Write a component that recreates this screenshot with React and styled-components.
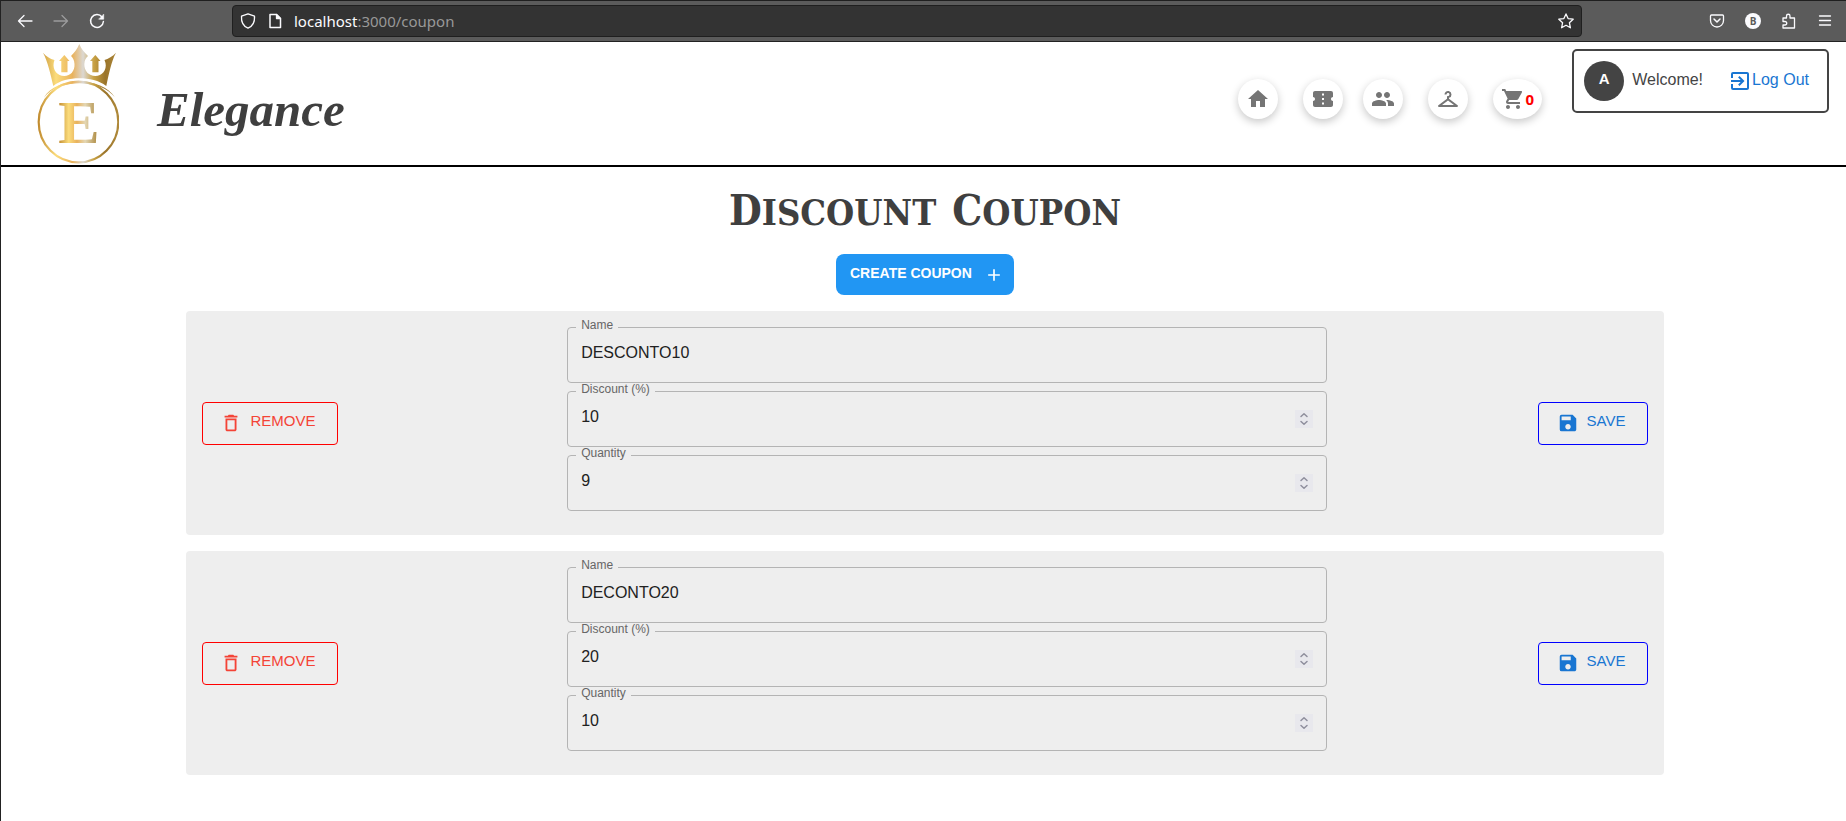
import React from "react";
import styled, { createGlobalStyle } from "styled-components";
import {
  MdHome,
  MdConfirmationNumber,
  MdPeople,
  MdCheckroom,
  MdShoppingCart,
  MdExitToApp,
  MdDeleteOutline,
  MdSave,
  MdAdd,
} from "react-icons/md";

const GlobalStyle = createGlobalStyle`
  *, *::before, *::after { box-sizing: border-box; }
  body {
    margin: 0;
    background: #fff;
    color: #444;
    font-family: "Liberation Sans", Arial, sans-serif;
    font-size: 16px;
  }
  button, input { font-family: inherit; }
`;

const Window = styled.div`
  min-height: 100vh;
  border-left: 1px solid #222;
`;

/* Browser bar */

const Toolbar = styled.div`
  display: flex;
  align-items: center;
  height: 42px;
  padding: 0 3px 0 6px;
  background: #5b5b5b;
  border-top: 1px solid #1f1f1f;
  border-bottom: 1px solid #222;
`;

const ToolGroup = styled.div`
  display: flex;
`;

const ToolButton = styled.button`
  display: flex;
  align-items: center;
  justify-content: center;
  width: 36px;
  height: 32px;
  padding: 0;
  border: 0;
  background: none;
  color: #fbfbfe;
  opacity: ${(p) => (p.disabled ? 0.4 : 1)};
`;

const AddressBar = styled.div`
  display: flex;
  align-items: center;
  gap: 11px;
  flex: 1;
  height: 32px;
  margin: 0 117px;
  padding: 0 7px;
  border: 1px solid #1f1f1f;
  border-radius: 4px;
  background: #333;
  color: #fbfbfe;
`;

const Address = styled.div`
  flex: 1;
  color: #989898;
  font: 15px/20px "Noto Sans", sans-serif;
`;

const Host = styled.span`
  color: #fbfbfe;
`;

/* Site header */

const Header = styled.header`
  display: flex;
  align-items: flex-start;
  padding-right: 17px;
  border-bottom: 2px solid #000;
`;

const Brand = styled.a`
  display: flex;
  align-items: center;
  gap: 38px;
  height: 123px;
  padding-left: 36px;
  color: #3f3f3f;
  text-decoration: none;
`;

const BrandName = styled.span`
  padding-top: 12px;
  font: italic bold 49px/56px "Liberation Serif", serif;
`;

const Nav = styled.nav`
  display: flex;
  gap: 20px;
  margin: 37px 30px 0 auto;
`;

const NavGroup = styled.div`
  display: flex;
  gap: 25px;
`;

const NavLink = styled.a`
  display: flex;
  align-items: center;
  justify-content: center;
  width: ${(p) => (p.$wide ? 49 : 40)}px;
  height: 40px;
  border-radius: 50%;
  background: #fff;
  box-shadow: 0 3px 8px rgba(0, 0, 0, 0.22);
  color: #757575;
  text-decoration: none;
`;

const CartCount = styled.span`
  color: #f00;
  font: bold 15px/20px "Open Sans", sans-serif;
`;

const UserBox = styled.div`
  display: flex;
  align-items: center;
  height: 64px;
  margin-top: 7px;
  padding: 0 18px 0 10px;
  border: 2px solid #444;
  border-radius: 5px;
`;

const Avatar = styled.div`
  width: 40px;
  height: 40px;
  margin-right: 8px;
  border-radius: 50%;
  background: #444;
  color: #fff;
  font: bold 15px/36px "Liberation Sans", sans-serif;
  text-align: center;
`;

const Welcome = styled.span`
  padding-bottom: 2px;
  margin-right: 25px;
`;

const LogOut = styled.a`
  display: flex;
  align-items: center;
  color: #1976d2;
  text-decoration: none;

  span { padding-bottom: 2px; }
`;

/* Coupon page */

const Main = styled.main`
  display: flex;
  flex-direction: column;
  align-items: center;
  padding: 18px 182px 40px 185px;
`;

const Title = styled.h1`
  display: flex;
  gap: 16px;
  height: 52px;
  margin: 0 0 17px;
  color: #3f3f3f;
  font: bold 36px/52px "DejaVu Serif Condensed", "DejaVu Serif", serif;
  font-stretch: condensed;
  text-transform: uppercase;
`;

const TitleWord = styled.span`
  display: block;

  &::first-letter { font-size: 42px; }
`;

const CreateButton = styled.button`
  display: flex;
  align-items: center;
  justify-content: space-between;
  width: 178px;
  height: 41px;
  padding: 0 10px 0 14px;
  border: 0;
  border-radius: 8px;
  background: #2196f3;
  color: #fff;
  font-size: 14px;
  font-weight: bold;

  span { padding-bottom: 3px; }
`;

const CouponList = styled.div`
  display: grid;
  gap: 16px;
  width: 100%;
  margin-top: 16px;
`;

const Card = styled.form`
  display: grid;
  grid-template-columns: 25fr 52fr 22fr;
  align-items: center;
  padding: 16px;
  border-radius: 4px;
  background: #eee;
`;

const ActionButton = styled.button`
  display: flex;
  align-items: center;
  justify-content: center;
  justify-self: ${(p) => (p.$end ? "end" : "start")};
  gap: 8px;
  width: ${(p) => (p.$end ? 110 : 136)}px;
  height: 43px;
  padding: 0 4px 0 0;
  border: 1px solid ${(p) => p.$border};
  border-radius: 4px;
  background: none;
  color: ${(p) => p.$color};
  font-size: 15px;

  span { padding-bottom: 6px; }
`;

const Fields = styled.div`
  display: grid;
  gap: 8px;
  padding-bottom: 8px;
`;

const Field = styled.div`
  position: relative;
  display: flex;
  align-items: center;
  height: 56px;
  padding: 0 13px;
  border: 1px solid #b4b4b4;
  border-radius: 4px;
`;

const Label = styled.label`
  position: absolute;
  top: -9px;
  left: 8px;
  padding: 0 5px;
  background: #eee;
  color: #666;
  font-size: 12px;
  line-height: 12px;
`;

const Input = styled.input`
  flex: 1;
  min-width: 0;
  height: 54px;
  padding: 0 0 5px;
  border: 0;
  outline: 0;
  background: none;
  color: #212121;
  font-size: 16px;
  appearance: textfield;

  &::-webkit-inner-spin-button { display: none; }
`;

const Stepper = styled.span`
  display: flex;
  width: 18px;
  height: 18px;
  background: #e8e8ed;
  color: #8f8f9d;
`;

const Line = ({ children, size = 16, ...rest }) => (
  <svg
    width={size}
    height={size}
    viewBox="0 0 16 16"
    fill="none"
    stroke="currentColor"
    strokeWidth="1.3"
    strokeLinecap="round"
    strokeLinejoin="round"
    aria-hidden="true"
    {...rest}
  >
    {children}
  </svg>
);

const BrandLogo = () => (
  <svg width="82" height="122" viewBox="-1 1 82 122" aria-hidden="true">
    <defs>
      <linearGradient id="gold" gradientUnits="userSpaceOnUse" x1="0" y1="0" x2="82" y2="0">
        <stop offset="0" stopColor="#c08a2e" />
        <stop offset="0.22" stopColor="#fbdc7c" />
        <stop offset="0.42" stopColor="#e9b25c" />
        <stop offset="0.55" stopColor="#dcd8d2" />
        <stop offset="0.68" stopColor="#c9a244" />
        <stop offset="0.82" stopColor="#9a742a" />
        <stop offset="1" stopColor="#b28c3c" />
      </linearGradient>
      <linearGradient id="letter" x1="0" y1="0" x2="1" y2="0">
        <stop offset="0" stopColor="#c08a2e" />
        <stop offset="0.25" stopColor="#fbdc7c" />
        <stop offset="0.45" stopColor="#e9b25c" />
        <stop offset="0.65" stopColor="#e4d7b4" />
        <stop offset="1" stopColor="#a37c2c" />
      </linearGradient>
    </defs>
    <g fill="url(#gold)">
      <path d="M41.3 2C43 7 47 11 50 14C48 16 46.500 18 46.300 22C46 29 51 34 57.300 34C64 34 69 28 67.500 21L66.500 18C70 17 75 14 78 10.700C73 20 71 32 68.300 44C61 38.500 51 36.300 41.300 36.300C31.500 36.300 22 38.500 15.300 44C12.500 32 10 20 5 10.700C8 14 12 17 16.500 18L15.700 21C14.500 28 19.500 34 26.300 34C32.500 34 37 29 36.500 22C36.200 18 35 16 33 14C36 11 39.500 7 41.300 2Z" />
      <path d="M26.300 13L31.500 19H29.500V30.300H23.300V19H21Z" />
      <path d="M57.300 13L62.500 19H60.500V30.300H54.300V19H52Z" />
      <path d="M6 55.500C18 34 64 34 77 55.500C63 36.500 20 36.500 6 55.500Z" />
    </g>
    <ellipse cx="40.500" cy="80" rx="39.800" ry="40.400" fill="none" stroke="url(#gold)" strokeWidth="2.200" />
    <text
      x="41"
      y="101"
      textAnchor="middle"
      fontFamily="Liberation Serif, serif"
      fontWeight="bold"
      fontSize="62"
      fill="url(#letter)"
    >
      E
    </text>
  </svg>
);

const coupons = [
  { id: "a", name: "DESCONTO10", discount: 10, quantity: 9 },
  { id: "b", name: "DECONTO20", discount: 20, quantity: 10 },
];

const CouponField = ({ id, label, type = "text", value }) => (
  <Field>
    <Label htmlFor={id}>{label}</Label>
    <Input id={id} type={type} defaultValue={value} />
    {type === "number" && (
      <Stepper aria-hidden="true">
        <Line size={18} viewBox="0 0 18 18" strokeWidth="1.5">
          <path d="M6 6.500L9 3.700L12 6.500M6 11.500L9 14.300L12 11.500" />
        </Line>
      </Stepper>
    )}
  </Field>
);

const CouponCard = ({ coupon }) => (
  <Card onSubmit={(e) => e.preventDefault()}>
    <ActionButton type="button" $border="#f00" $color="#f44336">
      <MdDeleteOutline size={22} />
      <span>REMOVE</span>
    </ActionButton>
    <Fields>
      <CouponField id={`name-${coupon.id}`} label="Name" value={coupon.name} />
      <CouponField id={`discount-${coupon.id}`} label="Discount (%)" type="number" value={coupon.discount} />
      <CouponField id={`quantity-${coupon.id}`} label="Quantity" type="number" value={coupon.quantity} />
    </Fields>
    <ActionButton type="submit" $end $border="#00f" $color="#1976d2">
      <MdSave size={22} />
      <span>SAVE</span>
    </ActionButton>
  </Card>
);

export default function App() {
  return (
    <Window>
      <GlobalStyle />
      <Toolbar>
        <ToolGroup>
          <ToolButton aria-label="Back">
            <Line><path d="M15 8H1.500M7 2.500L1.500 8L7 13.500" /></Line>
          </ToolButton>
          <ToolButton aria-label="Forward" disabled>
            <Line><path d="M1 8H14.500M9 2.500L14.500 8L9 13.500" /></Line>
          </ToolButton>
          <ToolButton aria-label="Reload">
            <Line strokeWidth="1.500">
              <path d="M13 4A6.400 6.400 0 1 0 14.400 8.500" />
              <path d="M14.700 1.500V6.200H10Z" fill="currentColor" strokeWidth="0.600" />
            </Line>
          </ToolButton>
        </ToolGroup>
        <AddressBar>
          <Line><path d="M8 0.800L14.500 3.200C14.900 9 13 13 8 15.200C3 13 1.100 9 1.500 3.200Z" /></Line>
          <Line>
            <path d="M3 1.500H9.500L13.500 5.500V14.500H3Z" strokeWidth="1.500" />
            <path d="M9.500 1.500V5.500H13.500Z" fill="currentColor" />
          </Line>
          <Address><Host>localhost</Host>:3000/coupon</Address>
          <Line>
            <path d="M8 0.900L10.100 5.600L15.200 6.200L11.400 9.700L12.400 14.800L8 12.300L3.600 14.800L4.600 9.700L0.800 6.200L5.900 5.600Z" />
          </Line>
        </AddressBar>
        <ToolGroup>
          <ToolButton aria-label="Save to Pocket">
            <Line>
              <path d="M2.500 2H13.500Q14.500 2 14.500 3V7.500A6.500 6.500 0 0 1 1.500 7.500V3Q1.500 2 2.500 2Z" />
              <path d="M5 6L8 9L11 6" strokeWidth="1.500" />
            </Line>
          </ToolButton>
          <ToolButton aria-label="Account">
            <svg width="16" height="16" viewBox="0 0 16 16" aria-hidden="true">
              <circle cx="8" cy="8" r="8" fill="#fbfbfe" />
              <text x="8" y="11.500" textAnchor="middle" fontSize="10" fontWeight="bold" fontFamily="Open Sans, sans-serif" fill="#5b5b5b">B</text>
            </svg>
          </ToolButton>
          <ToolButton aria-label="Extensions">
            <Line>
              <path d="M2 5H5.500V3A1.700 1.700 0 0 1 9 3V5H13.500V15H2V12H4A1.700 1.700 0 0 0 4 8.500H2Z" />
            </Line>
          </ToolButton>
          <ToolButton aria-label="Menu">
            <Line><path d="M2.500 3H13.500M2.500 7.500H13.500M2.500 12H13.500" /></Line>
          </ToolButton>
        </ToolGroup>
      </Toolbar>

      <Header>
        <Brand href="#home">
          <BrandLogo />
          <BrandName>Elegance</BrandName>
        </Brand>
        <Nav>
          <NavGroup>
            <NavLink href="#home" aria-label="Home"><MdHome size={24} /></NavLink>
            <NavLink href="#coupon" aria-label="Coupons"><MdConfirmationNumber size={24} /></NavLink>
          </NavGroup>
          <NavGroup>
            <NavLink href="#users" aria-label="Users"><MdPeople size={24} /></NavLink>
            <NavLink href="#clothes" aria-label="Clothes"><MdCheckroom size={24} /></NavLink>
            <NavLink href="#cart" aria-label="Cart" $wide>
              <MdShoppingCart size={24} />
              <CartCount>0</CartCount>
            </NavLink>
          </NavGroup>
        </Nav>
        <UserBox>
          <Avatar>A</Avatar>
          <Welcome>Welcome!</Welcome>
          <LogOut href="#logout">
            <MdExitToApp size={24} />
            <span>Log Out</span>
          </LogOut>
        </UserBox>
      </Header>

      <Main>
        <Title>
          <TitleWord>Discount</TitleWord>
          <TitleWord>Coupon</TitleWord>
        </Title>
        <CreateButton type="button">
          <span>CREATE COUPON</span>
          <MdAdd size={20} />
        </CreateButton>
        <CouponList>
          {coupons.map((c) => (
            <CouponCard key={c.id} coupon={c} />
          ))}
        </CouponList>
      </Main>
    </Window>
  );
}
